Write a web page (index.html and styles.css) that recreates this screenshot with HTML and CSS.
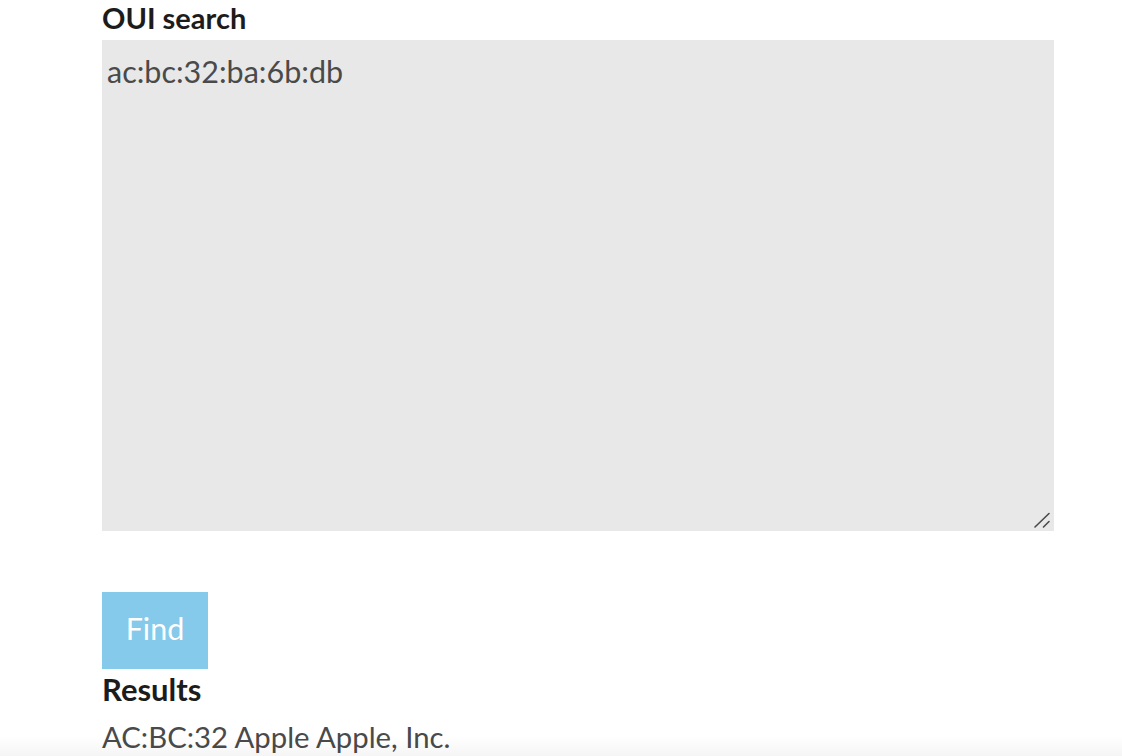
FILE: index.html
```html
<!DOCTYPE html>
<html>
<head>
<meta charset="utf-8">
<link rel="stylesheet" href="styles.css">
</head>
<body>
<main class="page">
  <label class="label" for="q">OUI search</label>
  <div class="field">
    <textarea id="q" class="query">ac:bc:32:ba:6b:db</textarea>
    <svg class="grip" width="16" height="16" viewBox="0 0 16 16" aria-hidden="true">
      <line x1="1" y1="15" x2="15" y2="1.5" stroke="#4a4a4a" stroke-width="1.6" stroke-linecap="round"/>
      <line x1="9.5" y1="15" x2="15" y2="9.5" stroke="#4a4a4a" stroke-width="1.6" stroke-linecap="round"/>
    </svg>
  </div>
  <button class="find">Find</button>
  <h2 class="results-title">Results</h2>
  <div class="result">AC:BC:32 Apple Apple, Inc.</div>
</main>
<div class="fade"></div>
</body>
</html>
```
FILE: styles.css
```css
html, body {
  margin: 0;
  padding: 0;
  background: #fff;
  height: 756px;
  overflow: hidden;
}
body {
  font-family: "Lato", "Noto Sans", sans-serif;
  color: #222;
}
.page {
  width: 952px;
  margin-left: 102px;
  display: flex;
  flex-direction: column;
  align-items: flex-start;
}
.label {
  font-size: 29px;
  font-weight: 700;
  line-height: 36px;
  height: 40px;
  color: #1c1c1c;
}
.field {
  position: relative;
  width: 952px;
  height: 491px;
}
.query {
  display: block;
  box-sizing: border-box;
  width: 952px;
  height: 491px;
  border: none;
  outline: none;
  background: #e8e8e8;
  font-family: inherit;
  font-size: 30.5px;
  line-height: 38px;
  color: #4a4a4a;
  padding: 12px 5px;
  margin: 0;
  resize: none;
}
.grip {
  position: absolute;
  right: 4px;
  bottom: 3px;
}
.find {
  margin-top: 61px;
  width: 106px;
  height: 77px;
  border: none;
  background: #85c9eb;
  color: #fff;
  font-family: inherit;
  font-size: 30.5px;
  font-weight: 400;
  padding: 0 0 5px 0;
}
.results-title {
  margin: 0;
  font-size: 31px;
  font-weight: 700;
  line-height: 40px;
  color: #1c1c1c;
}
.result {
  font-size: 29.3px;
  line-height: 56px;
  color: #4a4a4a;
}
.fade {
  position: fixed;
  left: 0;
  right: 0;
  bottom: 0;
  height: 20px;
  background: linear-gradient(rgba(0,0,0,0), rgba(0,0,0,0.04));
  pointer-events: none;
}
```
